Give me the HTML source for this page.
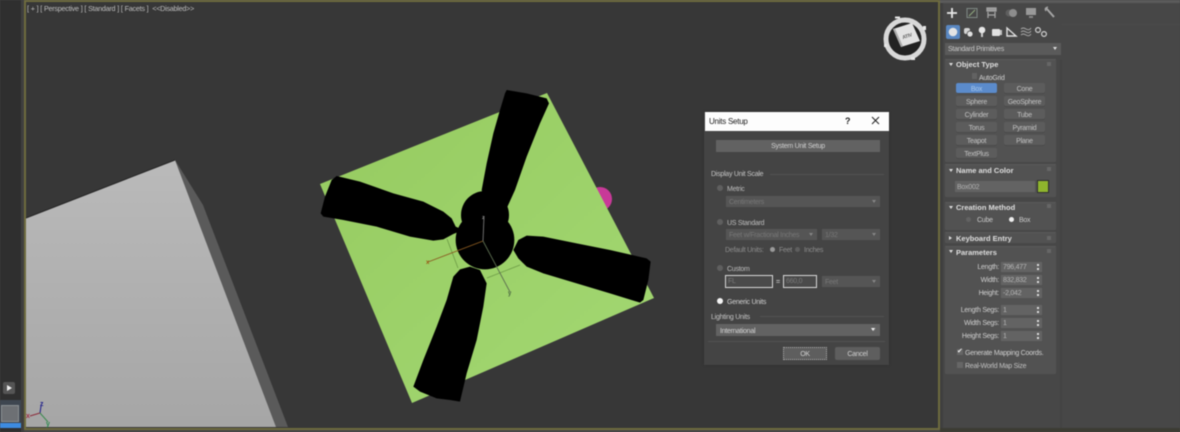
<!DOCTYPE html>
<html lang="en"><head><meta charset="utf-8"><title>Units Setup</title>
<style>
html,body{margin:0;padding:0;width:1180px;height:432px;overflow:hidden;background:#474747}
#r{position:absolute;left:0;top:0;width:1180px;height:432px;overflow:hidden;font-family:"Liberation Sans",sans-serif;font-size:7px;letter-spacing:-.25px;color:#c9c9c9;filter:blur(.5px)}
#r div{position:absolute;box-sizing:border-box}
.t{white-space:nowrap;line-height:12px;height:10px}
.h{font-weight:bold;font-size:7.5px;letter-spacing:0;color:#dedede;white-space:nowrap;line-height:12px;height:10px}
.b{background:#5c5c5c;border-radius:2px;text-align:center;line-height:14px;height:11px;width:41px;color:#c2c2c2;box-shadow:inset 0 -1px 0 #4a4a4a}
.ro{left:945px;width:111px;background:#525252;border-top:1px solid #5a5a5a;border-radius:1px}
.l{left:950px;width:49px;text-align:right;white-space:nowrap;line-height:12px;height:10px;color:#cfcfcf}
.f{left:1001px;width:41px;height:10px;background:#636363;line-height:12px;padding-left:2px;color:#b5b5b5}
.f:after{content:"";position:absolute;right:3px;top:2px;width:2px;height:6px;border-top:2px solid #ddd;border-bottom:2px solid #ddd;box-sizing:border-box}
.tri{width:0;height:0;border-left:2px solid transparent;border-right:2px solid transparent;border-top:3px solid #ddd}
.dd{background:#555;height:11px;line-height:13px;padding-left:3px;color:#777}
.dd:after{content:"";position:absolute;right:4px;top:4px;width:0;height:0;border-left:2px solid transparent;border-right:2px solid transparent;border-top:3px solid #858585}
.rad{width:6px;height:6px;border-radius:50%;background:#5f5f5f}
.ln{height:1px;background:#525252}
</style></head><body><div id="r">
<!-- left strip -->
<div style="left:0;top:0;width:21px;height:432px;background:#2f2f2f"></div>
<div style="left:21px;top:0;width:3px;height:432px;background:#3f3f3f"></div>
<div style="left:3px;top:382px;width:12px;height:12px;background:#555;border-radius:2px"></div>
<div style="left:7px;top:385px;width:0;height:0;border-left:5px solid #eee;border-top:3px solid transparent;border-bottom:3px solid transparent"></div>
<div style="left:0;top:400px;width:21px;height:24px;background:#3e4650"></div>
<div style="left:1px;top:405px;width:18px;height:17px;background:#6d7074;border:1px solid #8a8f93"></div>
<div style="left:0;top:423px;width:21px;height:5px;background:#3d8be0"></div>

<!-- viewport -->
<div style="left:24px;top:0;width:916px;height:430px;background:#373737;border:2px solid #6e6b3e"></div>
<svg style="position:absolute;left:0;top:0" width="1180" height="432" viewBox="0 0 1180 432">
<defs>
<linearGradient id="g" x1="0" y1="0" x2="0" y2="1"><stop offset="0" stop-color="#bababa"/><stop offset="1" stop-color="#a6a6a6"/></linearGradient>
<linearGradient id="pl" x1="0" y1="0" x2="1" y2="1"><stop offset="0" stop-color="#96cb60"/><stop offset="1" stop-color="#a3d873"/></linearGradient>
</defs>
<polygon points="175,160 203,205 288,427 276,427" fill="#5a5a5a"/>
<polygon points="26,218 175,160 276,427 26,427" fill="url(#g)"/>
<line x1="26" y1="218" x2="175" y2="160" stroke="#262626" stroke-width="1"/>
<circle cx="600" cy="199" r="12" fill="#c83a98"/>
<polygon points="320,184 547,93 654,298 412,403" fill="url(#pl)"/>
<g stroke="#6c9a45" stroke-width=".8" fill="none"><line x1="447" y1="239" x2="458" y2="268"/><line x1="487" y1="278" x2="520" y2="265"/></g>
<!-- fan traced in 3x coordinates -->
<g fill="#000" transform="translate(310,80) scale(.33333)">
<circle cx="525" cy="405" r="72"/>
<circle cx="525" cy="480" r="88"/>
<path d="M590,30 L650,40 L710,55 L717,70 L690,130 L650,230 L615,330 L590,385 L520,350 L515,330 L530,250 L550,160 L570,90 L585,40 Z"/>
<path d="M80,288 L150,305 L250,340 L340,365 L400,395 L425,415 L437,440 L460,450 L430,462 L400,478 L370,482 L300,470 L200,440 L100,420 L40,410 L32,400 L45,350 L65,300 Z"/>
<path d="M650,467 L700,470 L800,490 L900,510 L1010,535 L1022,545 L1015,600 L1000,660 L990,668 L900,640 L800,610 L700,580 L650,560 L625,535 L610,510 L625,480 Z"/>
<path d="M480,560 L510,570 L530,610 L520,680 L500,780 L470,880 L450,965 L420,960 L380,955 L330,935 L310,920 L340,840 L380,740 L410,660 L430,590 L450,568 Z"/>
</g>
<g fill="none" stroke-width=".9">
<line x1="483" y1="241" x2="484" y2="216" stroke="#777"/>
<line x1="483" y1="241" x2="428" y2="262" stroke="#8a5a20"/>
<line x1="483" y1="241" x2="510" y2="292" stroke="#5c6e50"/>
</g>
<text x="482" y="219" font-family="Liberation Sans" font-size="5" font-weight="bold" fill="#888">z</text>
<text x="426" y="264" font-family="Liberation Sans" font-size="6" font-weight="bold" fill="#9a5a14">x</text>
<text x="508" y="295" font-family="Liberation Sans" font-size="6" font-weight="bold" fill="#4c6a40">y</text>
<g fill="none" stroke-width="1">
<line x1="40" y1="413" x2="41" y2="406" stroke="#1c1c8a"/>
<line x1="40" y1="413" x2="30" y2="416" stroke="#8c2a3a"/>
<line x1="40" y1="413" x2="48" y2="422" stroke="#3a8a4e"/>
</g>
<text x="40" y="406" font-family="Liberation Sans" font-size="7" font-weight="bold" fill="#1c1c8a">z</text>
<text x="26" y="418" font-family="Liberation Sans" font-size="7" font-weight="bold" fill="#a02c44">x</text>
<text x="46" y="426" font-family="Liberation Sans" font-size="7" font-weight="bold" fill="#2c8a4e">y</text>
<!-- view cube -->
<circle cx="905" cy="39" r="19" fill="#222" stroke="#d8d8d8" stroke-width="5"/>
<g fill="#e6e6e6"><rect x="895" y="16.5" width="5" height="2"/><rect x="923" y="26" width="3" height="4"/><rect x="884" y="44" width="3" height="3"/><rect x="911" y="57" width="4" height="3"/></g>
<polygon points="893,29 912,23 920,41 901,47" fill="#e2e2e2"/>
<polygon points="893,29 901,47 903,46.5 895,28.5" fill="#aaa"/>
<text x="902" y="38" font-family="Liberation Sans" font-size="5" font-weight="bold" fill="#666" transform="rotate(-18 906 36)">ATIV</text>
</svg>
<div class="t" style="left:27px;top:3px;color:#bdbdbd;font-size:7.2px;word-spacing:.2px">[ + ] [ Perspective ] [ Standard ] [ Facets ] &nbsp;&lt;&lt;Disabled&gt;&gt;</div>

<!-- right panel -->
<div style="left:940px;top:0;width:240px;height:428px;background:#474747"></div>
<div style="left:940px;top:0;width:240px;height:3px;background:#5b5b5b"></div>
<div style="left:940px;top:428px;width:240px;height:4px;background:#3c3c33"></div>
<div style="left:940px;top:3px;width:3px;height:425px;background:#3f3f3f"></div>
<div style="left:1060px;top:60px;width:2px;height:368px;background:#434343"></div>
<div style="left:1062px;top:24px;width:118px;height:1px;background:#4b4b4b"></div>
<svg style="position:absolute;left:940px;top:0;z-index:3" width="125" height="42" viewBox="940 0 125 42">
<g stroke="#e6e6e6" stroke-width="1.8"><line x1="947" y1="13" x2="957" y2="13"/><line x1="952" y1="8" x2="952" y2="18"/></g>
<g fill="none" stroke="#7f8a85" stroke-width="1"><rect x="967" y="8.5" width="10" height="9"/><path d="M969,16 L975,10" stroke="#90aa80"/></g>
<g fill="none" stroke="#a5a5a5" stroke-width="1.3"><rect x="987" y="8" width="9" height="3" fill="#999"/><path d="M988,12 V18 M995,12 V18 M988,15 H995"/></g>
<circle cx="1009" cy="13" r="3.5" fill="#5e5e5e"/><circle cx="1013" cy="13" r="4" fill="#8d8d8d"/>
<rect x="1026" y="8" width="10" height="7" fill="#999"/><rect x="1029" y="16" width="4" height="2" fill="#858585"/>
<path d="M1046,8 L1054,17" stroke="#a5a5a5" stroke-width="2"/><path d="M1046,11 Q1044,8 1048,7" stroke="#a5a5a5" fill="none" stroke-width="1.4"/>
<rect x="946" y="25" width="14" height="14" rx="2" fill="#5a88c2"/><circle cx="953" cy="32" r="4.3" fill="#e4e4e4"/>
<rect x="964" y="28" width="6" height="6" rx="2" fill="#d4d4d4"/><circle cx="970" cy="34" r="3" fill="#e0e0e0" stroke="#444" stroke-width=".7"/>
<circle cx="982" cy="30" r="3.3" fill="#e6e6e6"/><rect x="981" y="33" width="2" height="4" fill="#ccc"/>
<rect x="992" y="29" width="8" height="7" rx="1" fill="#e0e0e0"/><rect x="1000" y="30" width="2" height="5" fill="#c0c0c0"/>
<path d="M1007,28 V36 H1016 Z" fill="none" stroke="#e0e0e0" stroke-width="1.4"/>
<g fill="none" stroke="#aaa" stroke-width=".9"><path d="M1021,29 Q1023,27 1026,29 T1031,28 M1021,32 Q1023,30 1026,32 T1031,31 M1021,35 Q1023,33 1026,35 T1031,34"/></g>
<g fill="none" stroke="#d0d0d0" stroke-width="1.2"><circle cx="1038" cy="30" r="2.4"/><circle cx="1044" cy="34" r="2.4"/></g>
</svg>
<div style="left:945px;top:43px;width:116px;height:12px;background:#5a5a5a;line-height:14px;padding-left:3px;color:#c9c9c9">Standard Primitives</div>
<div class="tri" style="left:1053px;top:47px"></div>

<!-- Object Type -->
<div class="ro" style="top:59px;height:103px"></div>
<div class="tri" style="left:949px;top:63px"></div>
<div class="h" style="left:956px;top:59px">Object Type</div>
<div style="left:1047px;top:62px;width:4px;height:4px;background:#666"></div>
<div style="left:972px;top:73px;width:5px;height:6px;background:#626262"></div>
<div class="t" style="left:979px;top:73px;color:#d0d0d0">AutoGrid</div>
<div class="b" style="left:956px;top:83px;background:#5b8bcb;color:#a6c6ea">Box</div><div class="b" style="left:1004px;top:83px">Cone</div>
<div class="b" style="left:956px;top:96px">Sphere</div><div class="b" style="left:1004px;top:96px">GeoSphere</div>
<div class="b" style="left:956px;top:109px">Cylinder</div><div class="b" style="left:1004px;top:109px">Tube</div>
<div class="b" style="left:956px;top:122px">Torus</div><div class="b" style="left:1004px;top:122px">Pyramid</div>
<div class="b" style="left:956px;top:135px">Teapot</div><div class="b" style="left:1004px;top:135px">Plane</div>
<div class="b" style="left:956px;top:148px">TextPlus</div>

<!-- Name and Color -->
<div class="ro" style="top:164px;height:33px"></div>
<div class="tri" style="left:949px;top:169px"></div>
<div class="h" style="left:956px;top:165px">Name and Color</div>
<div style="left:1047px;top:167px;width:4px;height:4px;background:#666"></div>
<div style="left:955px;top:181px;width:80px;height:11px;background:#636363;line-height:13px;padding-left:2px;color:#b0b0b0">Box002</div>
<div style="left:1037px;top:180px;width:12px;height:13px;background:#8fb52d;border:1px solid #2f2f2f"></div>

<!-- Creation Method -->
<div class="ro" style="top:202px;height:28px"></div>
<div class="tri" style="left:949px;top:206px"></div>
<div class="h" style="left:956px;top:202px">Creation Method</div>
<div style="left:1047px;top:204px;width:4px;height:4px;background:#666"></div>
<div style="left:966px;top:217px;width:5px;height:5px;border-radius:50%;background:#626262"></div>
<div class="t" style="left:977px;top:215px">Cube</div>
<div style="left:1009px;top:217px;width:5px;height:5px;border-radius:50%;background:#efefef"></div>
<div class="t" style="left:1019px;top:215px">Box</div>

<!-- Keyboard Entry -->
<div class="ro" style="top:232px;height:11px"></div>
<div style="left:949px;top:236px;width:0;height:0;border-left:3px solid #ddd;border-top:2px solid transparent;border-bottom:2px solid transparent"></div>
<div class="h" style="left:956px;top:233px">Keyboard Entry</div>
<div style="left:1047px;top:236px;width:4px;height:4px;background:#666"></div>

<!-- Parameters -->
<div class="ro" style="top:246px;height:128px"></div>
<div class="tri" style="left:949px;top:250px"></div>
<div class="h" style="left:956px;top:247px">Parameters</div>
<div style="left:1047px;top:249px;width:4px;height:4px;background:#666"></div>
<div class="l" style="top:262px">Length:</div><div class="f" style="top:262px">796,477</div>
<div class="l" style="top:275px">Width:</div><div class="f" style="top:275px">832,832</div>
<div class="l" style="top:288px">Height:</div><div class="f" style="top:288px">-2,042</div>
<div class="l" style="top:305px">Length Segs:</div><div class="f" style="top:305px">1</div>
<div class="l" style="top:318px">Width Segs:</div><div class="f" style="top:318px">1</div>
<div class="l" style="top:331px">Height Segs:</div><div class="f" style="top:331px">1</div>
<div style="left:957px;top:349px;width:6px;height:6px;background:#666"></div>
<div class="t" style="left:957px;top:346px;color:#eee;font-size:7px">✔</div>
<div class="t" style="left:965px;top:348px;color:#cfcfcf">Generate Mapping Coords.</div>
<div style="left:957px;top:362px;width:6px;height:6px;background:#666"></div>
<div class="t" style="left:965px;top:361px;color:#c0c0c0">Real-World Map Size</div>

<!-- Dialog -->
<div style="left:704px;top:112px;width:185px;height:253px;background:#444;box-shadow:0 0 2px #2d2d2d"></div>
<div style="left:705px;top:112px;width:184px;height:19px;background:#fdfdfd"></div>
<div class="t" style="left:709px;top:116px;color:#222;font-size:8px">Units Setup</div>
<div class="t" style="left:845px;top:115px;color:#222;font-size:9px;font-weight:bold">?</div>
<svg style="position:absolute;left:871px;top:116px" width="9" height="9"><path d="M1,1 L8,8 M8,1 L1,8" stroke="#222" stroke-width="1"/></svg>
<div style="left:716px;top:140px;width:164px;height:12px;background:#626262;text-align:center;line-height:14px;color:#d0d0d0">System Unit Setup</div>

<div class="ln" style="left:770px;top:174px;width:114px"></div>
<div class="t" style="left:711px;top:169px;color:#c4c4c4">Display Unit Scale</div>
<div class="rad" style="left:717px;top:185px"></div>
<div class="t" style="left:727px;top:184px;color:#bdbdbd">Metric</div>
<div class="dd" style="left:726px;top:196px;width:154px">Centimeters</div>
<div class="rad" style="left:717px;top:219px"></div>
<div class="t" style="left:727px;top:218px;color:#bdbdbd">US Standard</div>
<div class="dd" style="left:726px;top:229px;width:91px">Feet w/Fractional Inches</div>
<div class="dd" style="left:822px;top:229px;width:58px">1/32</div>
<div class="t" style="left:725px;top:245px;color:#8c8c8c">Default Units:</div>
<div style="left:770px;top:247px;width:5px;height:5px;border-radius:50%;background:#9a9a9a"></div>
<div class="t" style="left:779px;top:245px;color:#8c8c8c">Feet</div>
<div style="left:795px;top:247px;width:5px;height:5px;border-radius:50%;background:#5e5e5e"></div>
<div class="t" style="left:804px;top:245px;color:#8c8c8c">Inches</div>
<div class="rad" style="left:717px;top:265px"></div>
<div class="t" style="left:727px;top:264px;color:#bdbdbd">Custom</div>
<div style="left:725px;top:275px;width:48px;height:13px;background:#4a4a4a;border:1px solid #d8d8d8;line-height:11px;padding-left:2px;color:#7a7a7a">FL</div>
<div class="t" style="left:776px;top:277px;color:#bbb;font-weight:bold">=</div>
<div style="left:783px;top:275px;width:34px;height:13px;background:#4a4a4a;border:1px solid #d8d8d8;line-height:11px;padding-left:2px;color:#7a7a7a">660,0</div>
<div class="dd" style="left:822px;top:276px;width:58px">Feet</div>
<div style="left:717px;top:298px;width:6px;height:6px;border-radius:50%;background:#f4f4f4"></div>
<div class="t" style="left:727px;top:297px;color:#cfcfcf">Generic Units</div>
<div class="ln" style="left:760px;top:316px;width:124px"></div>
<div class="t" style="left:711px;top:312px;color:#c4c4c4">Lighting Units</div>
<div class="dd" style="left:716px;top:324px;width:164px;height:12px;background:#626262;color:#d4d4d4;line-height:12px"></div>
<div class="t" style="left:720px;top:326px;color:#d4d4d4">International</div>
<div class="tri" style="left:871px;top:328px;border-top-color:#eee"></div>
<div class="ln" style="left:708px;top:341px;width:177px"></div>
<div style="left:783px;top:347px;width:44px;height:13px;background:#5e5e5e;border:1px dotted #a8a8a8;text-align:center;line-height:13px;color:#d0d0d0">OK</div>
<div style="left:835px;top:347px;width:45px;height:13px;background:#5e5e5e;border-radius:2px;text-align:center;line-height:15px;color:#d0d0d0">Cancel</div>
</div></body></html>
